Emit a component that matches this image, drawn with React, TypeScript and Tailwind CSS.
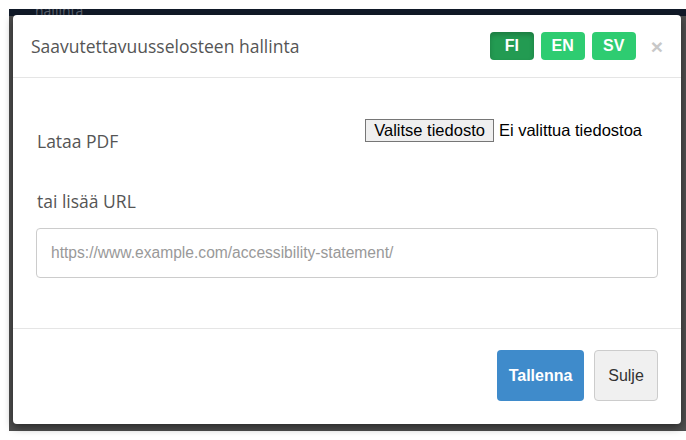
import React from "react";

const sans = { fontFamily: '"Open Sans", "Noto Sans", sans-serif' };
const arial = { fontFamily: '"Liberation Sans", Arial, sans-serif' };

function LangButton({ label, active }: { label: string; active?: boolean }) {
  return (
    <button
      className={
        active
          ? "h-[28px] w-[44px] rounded-[4px] bg-[#239b52] text-[16px] font-bold text-white shadow-[inset_0_3px_5px_rgba(0,0,0,0.2)]"
          : "h-[28px] w-[44px] rounded-[4px] bg-[#2ecc71] text-[16px] font-bold text-white"
      }
      style={arial}
    >
      {label}
    </button>
  );
}

export default function App() {
  return (
    <div className="relative h-[440px] w-[686px] overflow-hidden bg-white pl-[9px] pt-[9px]">
      {/* darkened page behind the modal */}
      <div className="flex h-[422px] w-[677px] flex-col bg-[#4f4f4f]">
        <div className="flex h-[7px] items-end overflow-hidden bg-[#111a29] pl-[26px]">
          <span className="text-[14px] leading-[10px] text-[#5d6470]" style={sans}>
            hallinta
          </span>
        </div>
      </div>

      {/* modal */}
      <div className="absolute left-[13px] top-[15px] flex h-[409px] w-[668px] flex-col rounded-[4px] bg-white shadow-[0_3px_9px_rgba(0,0,0,0.5)]">
        <div className="flex h-[63px] items-center justify-between border-b border-[#e5e5e5] pl-[18px] pr-[18px]">
          <h4 className="text-[17.5px] font-normal text-[#555]" style={sans}>
            Saavutettavuusselosteen hallinta
          </h4>
          <div className="flex items-center gap-[7px]">
            <LangButton label="FI" active />
            <LangButton label="EN" />
            <LangButton label="SV" />
            <span className="ml-[8px] text-[21px] font-bold leading-none text-[#c8c8c8]" style={arial}>
              ×
            </span>
          </div>
        </div>

        <div className="flex h-[250px] flex-col px-[23px] pt-[40px]">
          <div className="flex items-start justify-between">
            <label className="ml-px mt-[11px] text-[17.5px] leading-[24px] text-[#555]" style={sans}>
              Lataa PDF
            </label>
            <div className="mr-[16px] flex items-center gap-[5px] text-[16.5px] text-black" style={arial}>
              <span className="flex h-[23px] items-center border border-[#767676] bg-[#efefef] px-[8px] leading-none">
                Valitse tiedosto
              </span>
              <span>Ei valittua tiedostoa</span>
            </div>
          </div>
          <label className="ml-px mt-[36px] text-[17.5px] leading-[24px] text-[#555]" style={sans}>
            tai lisää URL
          </label>
          <div
            className="mt-[15px] flex h-[50px] items-center rounded-[4px] border border-[#cccccc] px-[14px] text-[15.6px] text-[#999]"
            style={arial}
          >
            https://www.example.com/accessibility-statement/
          </div>
        </div>

        <div className="flex flex-1 items-start justify-end gap-[10px] border-t border-[#e5e5e5] pr-[23px] pt-[21px]">
          <button className="h-[51px] w-[87px] rounded-[4px] bg-[#3f8bcb] text-[16px] font-bold text-white" style={arial}>
            Tallenna
          </button>
          <button
            className="h-[51px] w-[64px] rounded-[4px] border border-[#cccccc] bg-[#f0f0f0] text-[16px] text-[#333]"
            style={arial}
          >
            Sulje
          </button>
        </div>
      </div>
    </div>
  );
}
